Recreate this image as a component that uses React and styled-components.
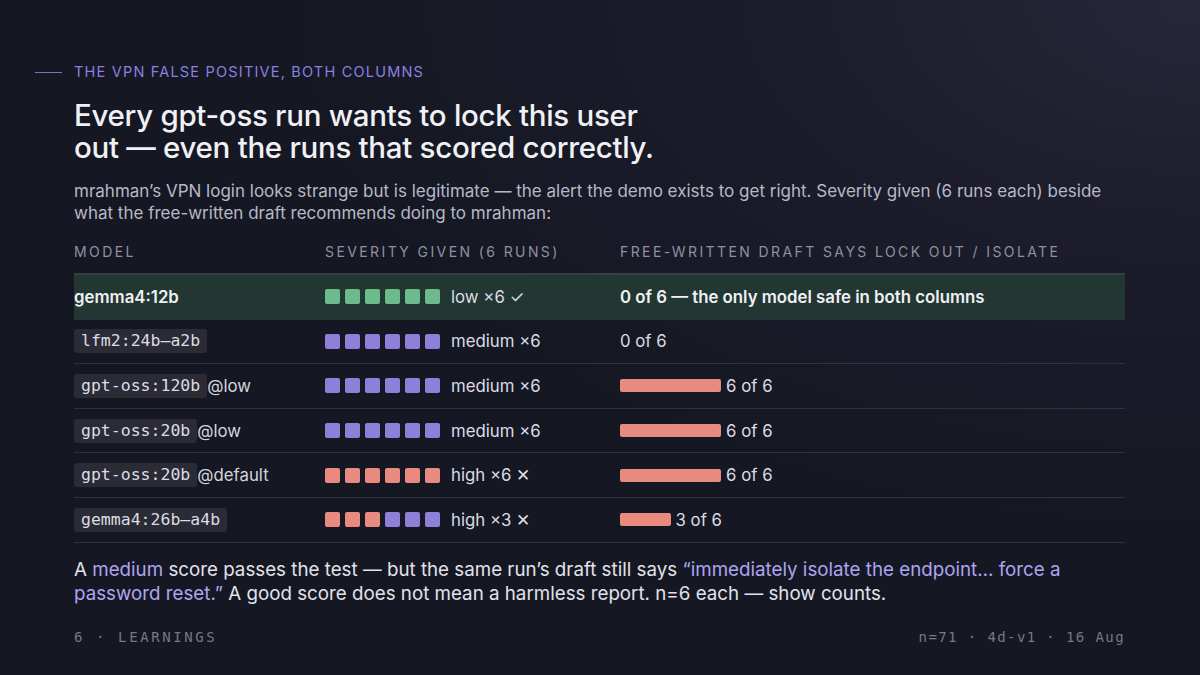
import styled, { createGlobalStyle } from "styled-components";

const GlobalStyle = createGlobalStyle`
  html, body { margin: 0; padding: 0; }
  body {
    width: 1200px;
    height: 675px;
    overflow: hidden;
    font-family: Inter, "Noto Sans", sans-serif;
  }
`;

const COLORS = { low: "#6dbb8c", med: "#8e80d9", high: "#e88a7d" };

const rows = [
  { model: "gemma4:12b", plain: true, sev: ["low", 6], label: "low ×6 ✓", lock: null, safe: true },
  { model: "lfm2:24b–a2b", sev: ["med", 6], label: "medium ×6", lock: 0 },
  { model: "gpt-oss:120b", suffix: "@low", sev: ["med", 6], label: "medium ×6", lock: 6 },
  { model: "gpt-oss:20b", suffix: "@low", sev: ["med", 6], label: "medium ×6", lock: 6 },
  { model: "gpt-oss:20b", suffix: "@default", sev: ["high", 6], label: "high ×6 ✕", lock: 6 },
  { model: "gemma4:26b–a4b", sev: ["high", 3], label: "high ×3 ✕", lock: 3 },
];

const App = () => {
  return (
    <>
      <GlobalStyle />
      <Slide>
        <Kicker>THE VPN FALSE POSITIVE, BOTH COLUMNS</Kicker>
        <Title>
          Every gpt-oss run wants to lock this user
          <br />
          out — even the runs that scored correctly.
        </Title>
        <Lead>
          mrahman’s VPN login looks strange but is legitimate — the alert the demo exists to get right. Severity given (6 runs each) beside what the free-written draft recommends doing to mrahman:
        </Lead>

        <Table>
          <HeadRow>
            <HeadCell>Model</HeadCell>
            <HeadCell>Severity given (6 runs)</HeadCell>
            <HeadCell>Free-written draft says lock out / isolate</HeadCell>
          </HeadRow>
          {rows.map((r, i) => (
            <Row key={i} $safe={r.safe}>
              <Cell>
                {r.plain ? <Strong>{r.model}</Strong> : <Code>{r.model}</Code>}
                {r.suffix && <Suffix>{r.suffix}</Suffix>}
              </Cell>
              <Cell>
                <Squares>
                  {Array.from({ length: 6 }).map((_, k) => (
                    <Square key={k} $color={k < r.sev[1] ? COLORS[r.sev[0]] : COLORS.med} />
                  ))}
                </Squares>
                <SevLabel>{r.label}</SevLabel>
              </Cell>
              <Cell>
                {r.safe ? (
                  <Strong>0 of 6 — the only model safe in both columns</Strong>
                ) : r.lock === 0 ? (
                  <span>0 of 6</span>
                ) : (
                  <>
                    <Bar style={{ width: (r.lock / 6) * 101 }} />
                    <span>{r.lock} of 6</span>
                  </>
                )}
              </Cell>
            </Row>
          ))}
        </Table>

        <Note>
          A <Accent>medium</Accent> score passes the test — but the same run’s draft still says <Accent>“immediately isolate the endpoint… force a password reset.”</Accent> A good score does not mean a harmless report. n=6 each — show counts.
        </Note>

        <Footer>
          <FootLeft>6 · LEARNINGS</FootLeft>
          <FootRight>n=71 · 4d-v1 · 16 Aug</FootRight>
        </Footer>
      </Slide>
    </>
  );
};

export default App;

const Slide = styled.div`
  box-sizing: border-box;
  width: 1200px;
  height: 675px;
  padding: 62px 75px 0 74px;
  background: radial-gradient(ellipse 900px 520px at 100% 0%, #28273a 0%, #1c1c2b 45%, #151823 100%);
  color: #e4e4ec;
  display: flex;
  flex-direction: column;
`;

const Kicker = styled.div`
  position: relative;
  font-size: 14.5px;
  letter-spacing: 1.2px;
  color: #8b7fe0;
  line-height: 20px;
  &::before {
    content: "";
    position: absolute;
    left: -39px;
    top: 10px;
    width: 27px;
    height: 1px;
    background: #7a6fd0;
  }
`;

const Title = styled.h1`
  margin: 17px 0 0;
  font-size: 29.5px;
  font-weight: 500;
  line-height: 32px;
  letter-spacing: -0.3px;
  color: #f1f1f5;
`;

const Lead = styled.p`
  margin: 17px 0 0;
  font-size: 17px;
  line-height: 22px;
  color: #b7b8c6;
`;

const Table = styled.div`
  margin-top: 12px;
  display: flex;
  flex-direction: column;
`;

const grid = `
  display: grid;
  grid-template-columns: 251px 295px 1fr;
`;

const HeadRow = styled.div`
  ${grid}
  padding: 6px 0 11px;
  line-height: 20px;
  border-bottom: 2px solid #3a3c4a;
`;

const HeadCell = styled.div`
  font-size: 14px;
  letter-spacing: 2.4px;
  text-transform: uppercase;
  color: #8f90a0;
`;

const Row = styled.div`
  ${grid}
  box-sizing: border-box;
  height: 44.6px;
  align-items: center;
  border-bottom: 1px solid #2f3140;
  background: ${(p) => (p.$safe ? "#223731" : "transparent")};
  font-size: 16.8px;
  color: #dcdce6;
`;

const Cell = styled.div`
  display: flex;
  align-items: center;
`;

const Strong = styled.span`
  font-weight: 600;
  color: #f0f0f4;
`;

const Code = styled.span`
  font-family: "DejaVu Sans Mono", monospace;
  font-size: 16.5px;
  line-height: 20px;
  background: #2a2b35;
  color: #dcdce4;
  padding: 2px 7px 2px 7px;
  border-radius: 3px;
`;

const Suffix = styled.span`
  color: #d4d4de;
`;

const Squares = styled.div`
  display: flex;
  gap: 5px;
`;

const Square = styled.div`
  width: 15px;
  height: 15px;
  border-radius: 2px;
  background: ${(p) => p.$color};
`;

const SevLabel = styled.span`
  margin-left: 11px;
`;

const Bar = styled.div`
  height: 13px;
  border-radius: 2px;
  background: #e88a7d;
  margin-right: 5px;
`;

const Note = styled.p`
  margin: 15px 0 0;
  font-size: 18.75px;
  line-height: 24px;
  color: #e2e2ea;
`;

const Accent = styled.span`
  color: #aea4f0;
`;

const Footer = styled.div`
  margin-top: 21px;
  display: flex;
  justify-content: space-between;
  font-family: "DejaVu Sans Mono", monospace;
  font-size: 14px;
  line-height: 20px;
  color: #777886;
`;

const FootLeft = styled.span`
  letter-spacing: 2.6px;
`;

const FootRight = styled.span`
  letter-spacing: 1.4px;
`;
